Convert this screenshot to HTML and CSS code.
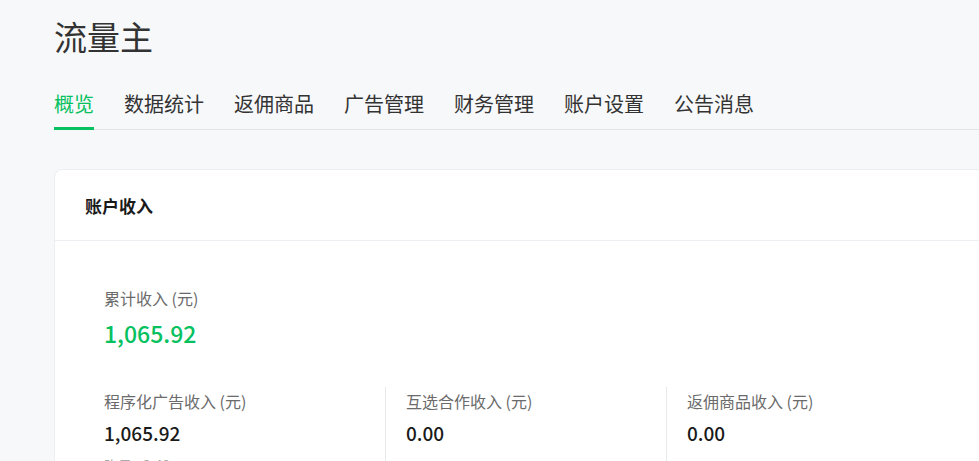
FILE: index.html
```html
<!DOCTYPE html>
<html lang="zh-CN">
<head>
<meta charset="utf-8">
<title>流量主</title>
<link rel="stylesheet" href="styles.css">
</head>
<body>
<div class="page">
  <h1 class="title">流量主</h1>
  <nav class="tabs">
    <a class="tab active">概览</a>
    <a class="tab">数据统计</a>
    <a class="tab">返佣商品</a>
    <a class="tab">广告管理</a>
    <a class="tab">财务管理</a>
    <a class="tab">账户设置</a>
    <a class="tab">公告消息</a>
  </nav>
  <section class="card">
    <div class="card-head">账户收入</div>
    <div class="card-body">
      <div class="total">
        <div class="label">累计收入 (元)</div>
        <div class="total-value">1,065.92</div>
      </div>
      <div class="cols">
        <div class="col">
          <div class="label">程序化广告收入 (元)</div>
          <div class="value">1,065.92</div>
          <div class="sub">昨日 +3.40</div>
        </div>
        <div class="col">
          <div class="label">互选合作收入 (元)</div>
          <div class="value">0.00</div>
        </div>
        <div class="col">
          <div class="label">返佣商品收入 (元)</div>
          <div class="value">0.00</div>
        </div>
      </div>
    </div>
  </section>
</div>
</body>
</html>
```
FILE: styles.css
```css
html, body {
  margin: 0;
  overflow: hidden;
}
body {
  background: #f7f8fa;
  font-family: "Noto Sans CJK SC", "Noto Sans", sans-serif;
  color: #333;
}
.page {
  padding: 13px 0 0 54px;
}
.title {
  margin: 0;
  font-size: 33px;
  font-weight: 400;
  line-height: 46px;
  color: #333;
}
.tabs {
  margin-top: 31px;
  display: flex;
  gap: 30px;
  border-bottom: 1px solid #e2e4e8;
}
.tab {
  position: relative;
  font-size: 20px;
  line-height: 28px;
  padding-bottom: 11px;
  color: #333;
}
.tab.active {
  color: #07c160;
}
.tab.active::after {
  content: "";
  position: absolute;
  left: 0;
  right: 0;
  bottom: -1px;
  height: 3px;
  background: #07c160;
}
.card {
  margin-top: 39px;
  background: #fff;
  border: 1px solid #eceef1;
  border-right: none;
  border-radius: 8px 0 0 0;
  min-height: 400px;
}
.card-head {
  height: 70px;
  display: flex;
  align-items: center;
  padding-left: 30px;
  font-size: 17px;
  font-weight: 700;
  color: #1a1a1a;
  border-bottom: 1px solid #eeeff2;
}
.card-body {
  padding: 45px 0 0 49px;
}
.label {
  font-size: 16px;
  line-height: 24px;
  color: #6b6b6b;
}
.total-value {
  margin-top: 7px;
  font-size: 23px;
  line-height: 32px;
  font-weight: 500;
  color: #07c160;
}
.cols {
  margin-top: 38px;
  display: flex;
}
.col {
  flex: 0 0 281px;
  box-sizing: border-box;
  padding-top: 2px;
  min-height: 100px;
}
.col + .col {
  border-left: 1px solid #e8e9ec;
  padding-left: 20px;
}
.value {
  margin-top: 6px;
  font-size: 19px;
  line-height: 28px;
  font-weight: 500;
  color: #1a1a1a;
}
.sub {
  margin-top: 8px;
  font-size: 14px;
  line-height: 20px;
  color: #aaa;
}
```
